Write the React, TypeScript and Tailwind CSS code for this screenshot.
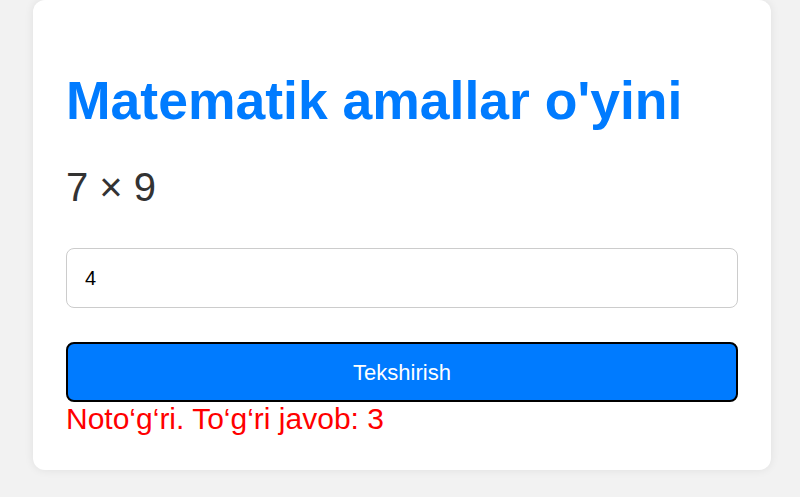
export default function App() {
    return (
        <div className="min-h-[497px] bg-[#f2f2f2] font-['Liberation_Sans',Arial,sans-serif]">
            <div className="ml-[33px] w-[738px] rounded-xl bg-white px-[33px] pt-[70px] pb-[34px] shadow-[0_0_10px_rgba(0,0,0,0.08)]">
                <h1 className="text-[53.5px] font-bold leading-[62px] text-[#007bff]">
                    Matematik amallar o'yini
                </h1>
                <div className="mt-[32px] text-[40px] leading-[46px] text-[#333]">7 × 9</div>
                <input
                    defaultValue="4"
                    className="mt-[38px] block h-[60px] w-full rounded-lg border border-[#ccc] px-[18px] text-[20px] text-black"
                />
                <button className="mt-[34px] block h-[60px] w-full rounded-lg border-2 border-black bg-[#007bff] text-[22px] text-white">
                    Tekshirish
                </button>
                <div className="text-[30px] leading-[34px] text-[#ff0000]">Noto‘g‘ri. To‘g‘ri javob: 3</div>
            </div>
        </div>
    )
}
